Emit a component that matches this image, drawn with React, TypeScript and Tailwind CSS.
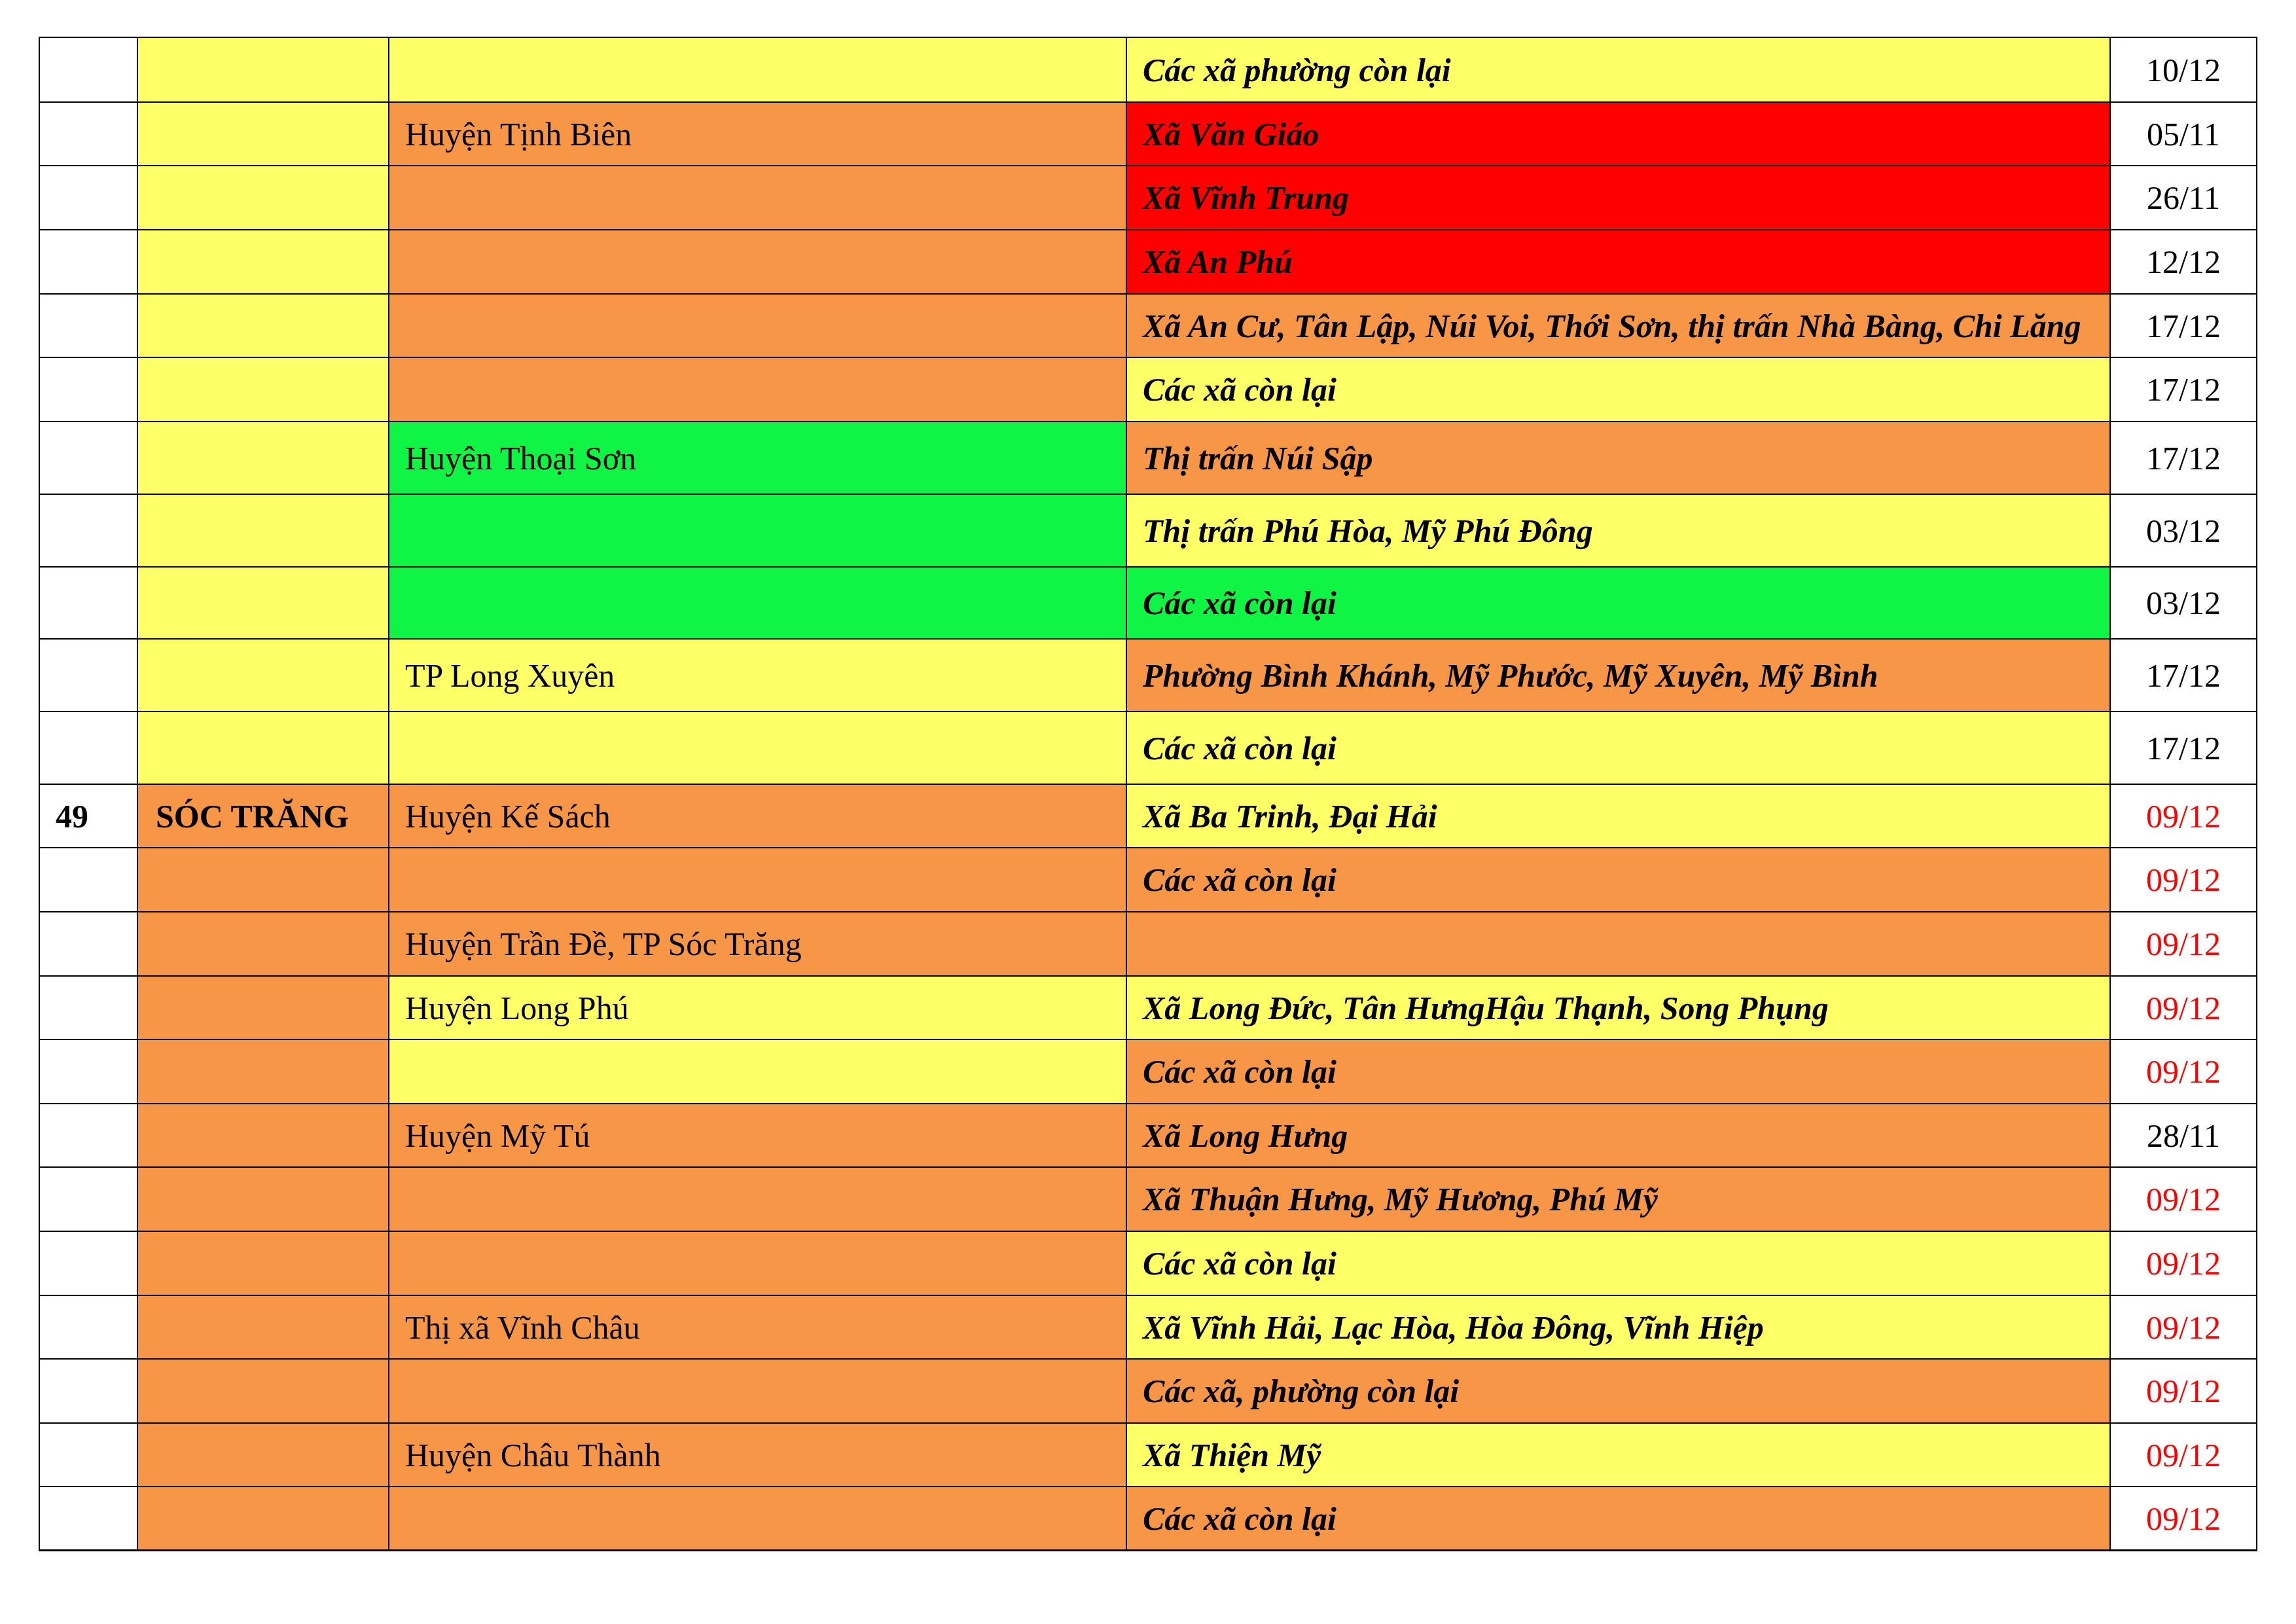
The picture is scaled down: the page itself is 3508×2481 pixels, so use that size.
type Fill = "w" | "y" | "o" | "r" | "g";

const FILL: Record<Fill, string> = {
  w: "bg-white",
  y: "bg-[#ffff66]",
  o: "bg-[#f79646]",
  r: "bg-[#ff0000]",
  g: "bg-[#10f544]",
};

type Row = {
  h: number;
  no?: string;
  province?: string;
  pFill: Fill;
  district?: string;
  dFill: Fill;
  commune?: string;
  cFill: Fill;
  date: string;
  late?: boolean;
};

const rows: Row[] = [
  { h: 99, pFill: "y", dFill: "y", commune: "Các xã phường còn lại", cFill: "y", date: "10/12" },
  { h: 97, pFill: "y", district: "Huyện Tịnh Biên", dFill: "o", commune: "Xã Văn Giáo", cFill: "r", date: "05/11" },
  { h: 98, pFill: "y", dFill: "o", commune: "Xã Vĩnh Trung", cFill: "r", date: "26/11" },
  { h: 98, pFill: "y", dFill: "o", commune: "Xã An Phú", cFill: "r", date: "12/12" },
  {
    h: 97,
    pFill: "y",
    dFill: "o",
    commune: "Xã An Cư, Tân Lập, Núi Voi, Thới Sơn, thị trấn Nhà Bàng, Chi Lăng",
    cFill: "o",
    date: "17/12",
  },
  { h: 98, pFill: "y", dFill: "o", commune: "Các xã còn lại", cFill: "y", date: "17/12" },
  { h: 111, pFill: "y", district: "Huyện Thoại Sơn", dFill: "g", commune: "Thị trấn Núi Sập", cFill: "o", date: "17/12" },
  { h: 111, pFill: "y", dFill: "g", commune: "Thị trấn Phú Hòa, Mỹ Phú Đông", cFill: "y", date: "03/12" },
  { h: 110, pFill: "y", dFill: "g", commune: "Các xã còn lại", cFill: "g", date: "03/12" },
  {
    h: 111,
    pFill: "y",
    district: "TP Long Xuyên",
    dFill: "y",
    commune: "Phường Bình Khánh, Mỹ Phước, Mỹ Xuyên, Mỹ Bình",
    cFill: "o",
    date: "17/12",
  },
  { h: 111, pFill: "y", dFill: "y", commune: "Các xã còn lại", cFill: "y", date: "17/12" },
  {
    h: 97,
    no: "49",
    province: "SÓC TRĂNG",
    pFill: "o",
    district: "Huyện Kế Sách",
    dFill: "o",
    commune: "Xã Ba Trinh, Đại Hải",
    cFill: "y",
    date: "09/12",
    late: true,
  },
  { h: 98, pFill: "o", dFill: "o", commune: "Các xã còn lại", cFill: "o", date: "09/12", late: true },
  { h: 98, pFill: "o", district: "Huyện Trần Đề, TP Sóc Trăng", dFill: "o", cFill: "o", date: "09/12", late: true },
  {
    h: 97,
    pFill: "o",
    district: "Huyện Long Phú",
    dFill: "y",
    commune: "Xã Long Đức, Tân HưngHậu Thạnh, Song Phụng",
    cFill: "y",
    date: "09/12",
    late: true,
  },
  { h: 98, pFill: "o", dFill: "y", commune: "Các xã còn lại", cFill: "o", date: "09/12", late: true },
  { h: 97, pFill: "o", district: "Huyện Mỹ Tú", dFill: "o", commune: "Xã Long Hưng", cFill: "o", date: "28/11" },
  { h: 98, pFill: "o", dFill: "o", commune: "Xã Thuận Hưng, Mỹ Hương, Phú Mỹ", cFill: "o", date: "09/12", late: true },
  { h: 98, pFill: "o", dFill: "o", commune: "Các xã còn lại", cFill: "y", date: "09/12", late: true },
  {
    h: 97,
    pFill: "o",
    district: "Thị xã Vĩnh Châu",
    dFill: "o",
    commune: "Xã Vĩnh Hải, Lạc Hòa, Hòa Đông, Vĩnh Hiệp",
    cFill: "y",
    date: "09/12",
    late: true,
  },
  { h: 98, pFill: "o", dFill: "o", commune: "Các xã, phường còn lại", cFill: "o", date: "09/12", late: true },
  { h: 97, pFill: "o", district: "Huyện Châu Thành", dFill: "o", commune: "Xã Thiện Mỹ", cFill: "y", date: "09/12", late: true },
  { h: 98, pFill: "o", dFill: "o", commune: "Các xã còn lại", cFill: "o", date: "09/12", late: true },
];

const cell = "flex items-center border-r-2 border-b-2 border-black";

export default function App() {
  return (
    <div className="h-[2481px] w-[3508px] bg-white pl-[59px] pt-[56px] font-['Liberation_Serif',serif] text-[50px] leading-none text-black">
      <div className="w-fit border-l-2 border-t-2 border-black">
        {rows.map((row, i) => {
          const last = i === rows.length - 1;
          const edge = last ? "border-b-[3px]" : "";
          return (
            <div
              key={i}
              className="grid grid-cols-[150px_384px_1127px_1503px_224px]"
              style={{ height: row.h }}
            >
              <div className={`${cell} ${edge} bg-white pl-6 font-bold`}>{row.no}</div>
              <div className={`${cell} ${edge} ${FILL[row.pFill]} pl-[27px] font-bold`}>{row.province}</div>
              <div className={`${cell} ${edge} ${FILL[row.dFill]} pl-6`}>{row.district}</div>
              <div className={`${cell} ${edge} ${FILL[row.cFill]} pl-6 font-bold italic whitespace-nowrap`}>
                {row.commune}
              </div>
              <div
                className={`${cell} ${edge} justify-center bg-white ${row.late ? "text-[#ff0000]" : "text-black"}`}
              >
                {row.date}
              </div>
            </div>
          );
        })}
      </div>
    </div>
  );
}
